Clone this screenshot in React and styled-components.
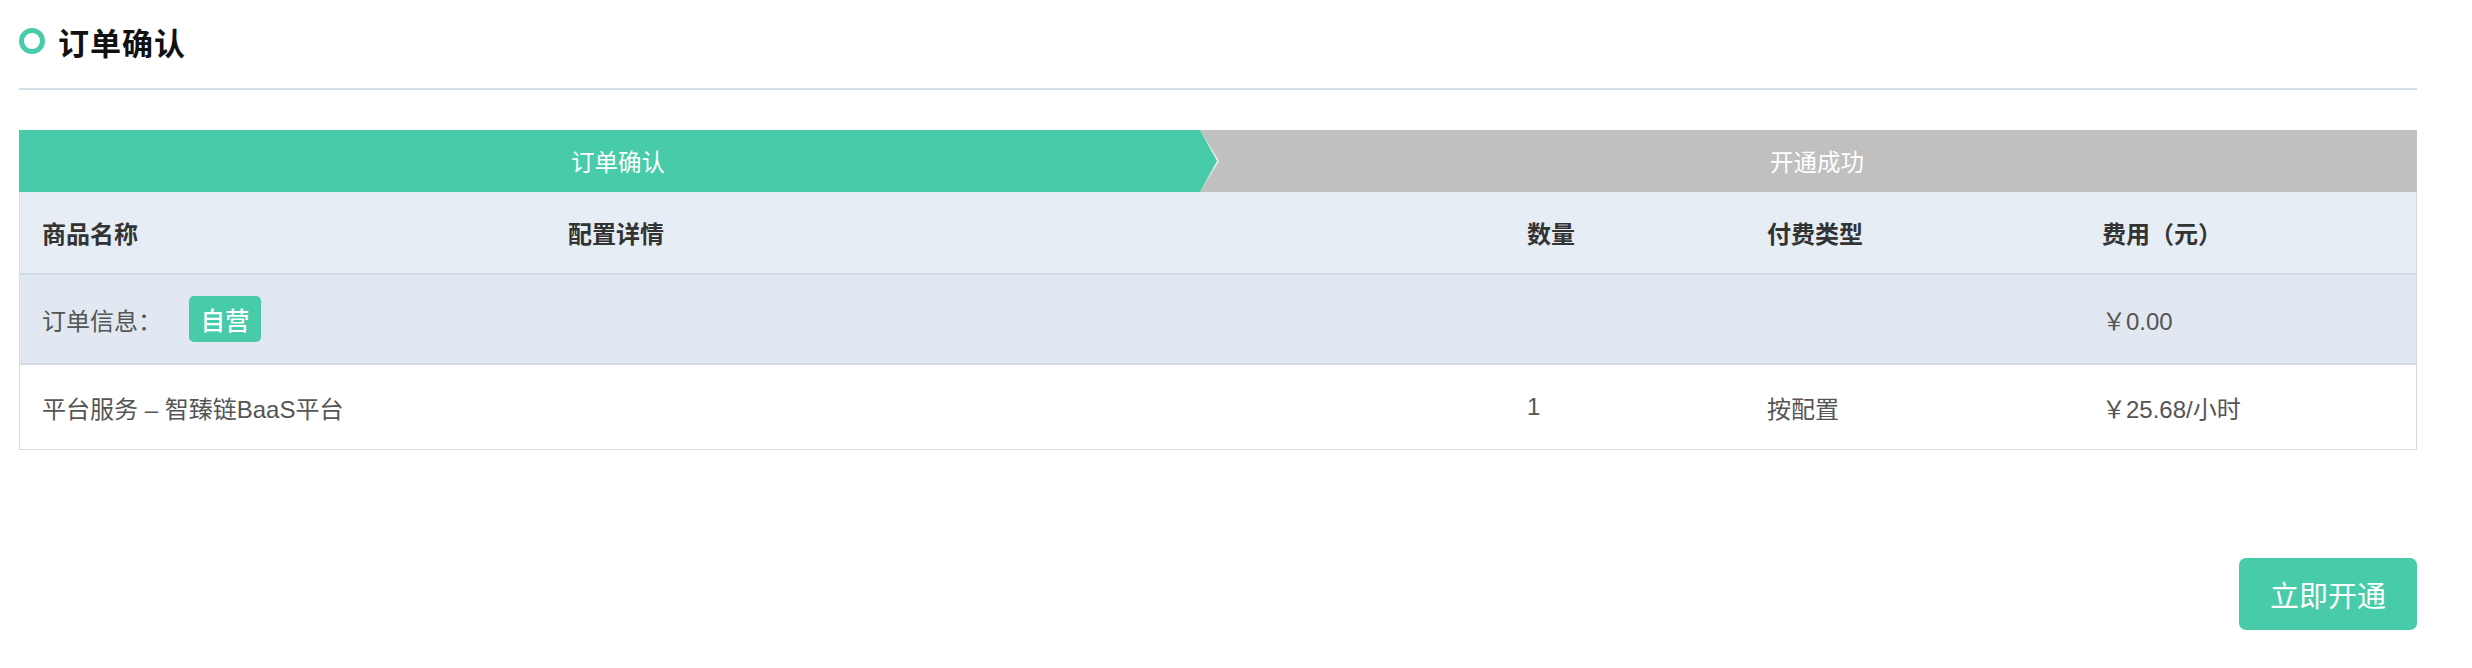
import React from "react";
import styled, { createGlobalStyle } from "styled-components";

const GREEN = "#47cba8";

const GlobalStyle = createGlobalStyle`
  body {
    margin: 0;
    background: #fff;
    font-family: "Liberation Sans", "Noto Sans CJK SC", sans-serif;
  }
`;

const columns = [
  { key: "name", title: "商品名称" },
  { key: "config", title: "配置详情" },
  { key: "count", title: "数量" },
  { key: "pay", title: "付费类型" },
  { key: "fee", title: "费用（元）" },
];

function App() {
  return (
    <Page>
      <GlobalStyle />
      <TitleBar>
        <Ring />
        <Title>订单确认</Title>
      </TitleBar>
      <Steps>
        <Step active>订单确认</Step>
        <Step>开通成功</Step>
      </Steps>
      <Table>
        <HeadRow>
          {columns.map((c) => (
            <HeadCell key={c.key}>{c.title}</HeadCell>
          ))}
        </HeadRow>
        <InfoRow>
          <Cell>
            <Label>订单信息：</Label>
            <Badge>自营</Badge>
          </Cell>
          <Cell />
          <Cell />
          <Cell />
          <Cell>￥0.00</Cell>
        </InfoRow>
        <ItemRow>
          <Cell>平台服务 – 智臻链BaaS平台</Cell>
          <Cell />
          <Cell>1</Cell>
          <Cell>按配置</Cell>
          <Cell>￥25.68/小时</Cell>
        </ItemRow>
      </Table>
      <Footer>
        <OpenButton>立即开通</OpenButton>
      </Footer>
    </Page>
  );
}

const Page = styled.div`
  padding: 0 55px 0 19px;
`;

const TitleBar = styled.div`
  display: flex;
  align-items: center;
  height: 90px;
  border-bottom: 2px solid #d3dde6;
  box-sizing: border-box;
  padding-bottom: 6px;
`;

const Ring = styled.span`
  width: 26px;
  height: 26px;
  border: 5px solid ${GREEN};
  border-radius: 50%;
  box-sizing: border-box;
  margin-right: 13px;
`;

const Title = styled.h1`
  margin: 0;
  font-family: "Noto Sans CJK SC", sans-serif;
  font-size: 31px;
  font-weight: 700;
  color: #111;
  letter-spacing: 1px;
`;

const Steps = styled.div`
  display: flex;
  margin-top: 40px;
  height: 62px;
  background: #c0c0c0;
`;

const Step = styled.div`
  position: relative;
  box-sizing: border-box;
  flex: ${(p) => (p.active ? "0 0 1181px" : "1")};
  display: flex;
  align-items: center;
  justify-content: center;
  font-family: "Noto Sans CJK SC", sans-serif;
  font-size: 23.5px;
  color: #fff;
  background: ${(p) => (p.active ? GREEN : "transparent")};
  ${(p) =>
    p.active &&
    `
    margin-right: 17px;
    padding-left: 17px;
    &::before {
      content: "";
      position: absolute;
      top: 0;
      right: -19px;
      border-style: solid;
      border-width: 31px 0 31px 19px;
      border-color: transparent transparent transparent #eef0ef;
    }
    &::after {
      content: "";
      position: absolute;
      top: 0;
      right: -17px;
      border-style: solid;
      border-width: 31px 0 31px 17px;
      border-color: transparent transparent transparent ${GREEN};
    }
  `}
`;

const Table = styled.div`
  border: 1px solid #d2dce6;
  border-top: none;
`;

const Row = styled.div`
  display: grid;
  grid-template-columns: 526px 959px 240px 335px 1fr;
  align-items: center;
  box-sizing: border-box;
  border-bottom: 2px solid #d2dce6;
  &:last-child {
    border-bottom: none;
  }
`;

const HeadRow = styled(Row)`
  height: 83px;
  background: #e6edf4;
`;

const InfoRow = styled(Row)`
  height: 90px;
  background: #e1e8f1;
`;

const ItemRow = styled(Row)`
  height: 84px;
  background: #fff;
`;

const HeadCell = styled.div`
  padding-left: 22px;
  font-family: "Noto Sans CJK SC", sans-serif;
  font-size: 24px;
  font-weight: 700;
  color: #333;
`;

const Cell = styled.div`
  display: flex;
  align-items: center;
  padding-left: 22px;
  font-size: 24px;
  color: #555;
`;

const Label = styled.span`
  width: 147px;
`;

const Badge = styled.span`
  display: inline-flex;
  align-items: center;
  justify-content: center;
  width: 72px;
  height: 46px;
  border-radius: 5px;
  background: ${GREEN};
  color: #fff;
  font-family: "Noto Sans CJK SC", sans-serif;
  font-size: 24.5px;
  font-weight: 500;
`;

const Footer = styled.div`
  display: flex;
  justify-content: flex-end;
  margin-top: 108px;
`;

const OpenButton = styled.button`
  width: 178px;
  height: 72px;
  border: none;
  border-radius: 7px;
  background: ${GREEN};
  color: #fff;
  font-family: "Noto Sans CJK SC", sans-serif;
  font-size: 29px;
  cursor: pointer;
`;

export default App;
